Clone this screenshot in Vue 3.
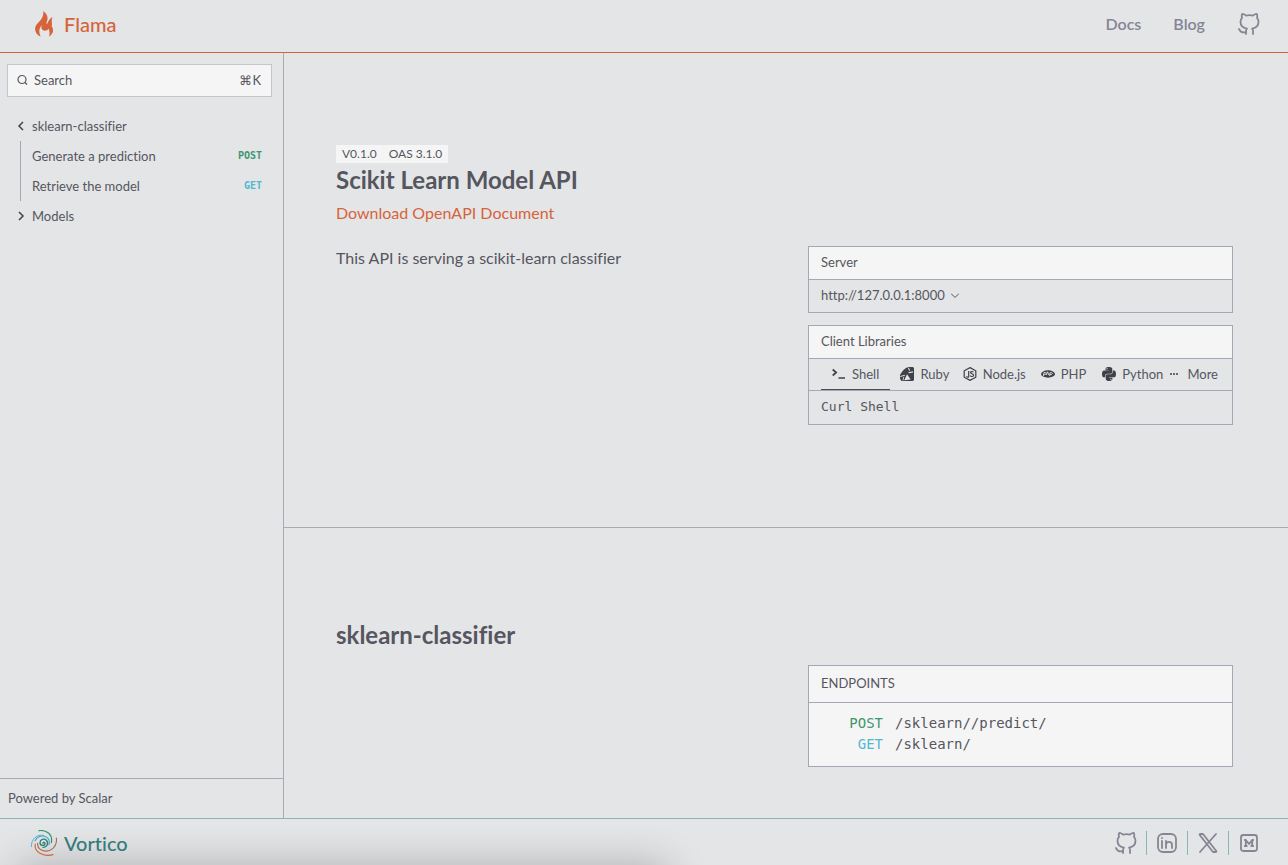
<script setup>
const methods = [
  { name: 'Generate a prediction', method: 'POST' },
  { name: 'Retrieve the model', method: 'GET' },
]
const endpoints = [
  { method: 'POST', path: '/sklearn//predict/' },
  { method: 'GET', path: '/sklearn/' },
]
const socials = [
  {
    label: 'GitHub',
    paths: [
      'M16 22.03V19.16C16.04 18.68 15.97 18.2 15.81 17.75C15.65 17.3 15.39 16.89 15.06 16.55C18.2 16.2 21.5 15.01 21.5 9.55C21.5 8.15 20.96 6.81 20 5.8C20.46 4.58 20.42 3.23 19.91 2.03C19.91 2.03 18.73 1.68 16 3.51C13.71 2.89 11.29 2.89 9 3.51C6.27 1.68 5.09 2.03 5.09 2.03C4.58 3.23 4.54 4.58 5 5.8C4.03 6.82 3.49 8.17 3.5 9.58C3.5 15 6.8 16.19 9.94 16.58C9.61 16.92 9.36 17.32 9.2 17.77C9.03 18.21 8.97 18.68 9 19.16V22.03',
      'M9 20.03C6 21 3.5 20.03 2 17.03',
    ],
  },
  {
    label: 'LinkedIn',
    paths: [
      'M21 8V16C21 18.76 18.76 21 16 21H8C5.24 21 3 18.76 3 16V8C3 5.24 5.24 3 8 3H16C18.76 3 21 5.24 21 8Z',
      'M7 17V13.5V10',
      'M11 17V13.75M11 10V13.75M11 13.75C11 10 17 10 17 13.75V17',
      'M7 7.01L7.01 7',
    ],
  },
  {
    label: 'X',
    paths: [
      'M16.82 20.77L3.75 3.97C3.45 3.57 3.73 3 4.23 3H6.71C6.89 3 7.07 3.09 7.18 3.23L20.25 20.03C20.55 20.43 20.27 21 19.77 21H17.29C17.11 21 16.93 20.91 16.82 20.77Z',
      'M20 3L4 21',
    ],
  },
  {
    label: 'Medium',
    paths: [
      'M4 17.6V6.4C4 5 5 4 6.4 4H17.6C19 4 20 5 20 6.4V17.6C20 19 19 20 17.6 20H6.4C5 20 4 19 4 17.6Z',
      'M7.8 9H8.8L12 13L15.2 9H16.2M8.8 9V15M15.2 9V15M7.8 15H9.8M14.2 15H16.2',
    ],
  },
]
</script>

<template>
  <div class="page">
    <header class="topbar">
      <a class="brand flama" href="#">
        <svg width="18" height="26" viewBox="0 0 54 78" aria-hidden="true">
          <path fill="currentColor" d="M25 0C37 9 40 20 36 31C34 36 34 38 36 40C40 32 42 24 53 18C47 30 53 37 50 46C57 55 56 67 42 77C46 66 42 60 42 53C37 59 25 62 21 55C18 51 19 46 22 42C12 50 10 62 17 77C4 71-2 60 1 48C5 34 28 26 25 0Z" />
        </svg>
        <span>Flama</span>
      </a>
      <nav class="topnav">
        <a href="#">Docs</a>
        <a href="#">Blog</a>
        <a href="#" aria-label="GitHub">
          <svg class="line-icon" viewBox="0 0 24 24"><path v-for="d in socials[0].paths" :key="d" :d="d" /></svg>
        </a>
      </nav>
    </header>

    <div class="body">
      <aside class="sidebar">
        <button class="search" type="button">
          <svg width="11" height="11" viewBox="0 0 11 11" fill="none" stroke="currentColor" stroke-width="1.2" aria-hidden="true">
            <circle cx="5" cy="5.500" r="4" /><path d="M8 8.500L10 10.500" />
          </svg>
          <span>Search</span>
          <span class="keys">⌘K</span>
        </button>
        <nav class="tree">
          <a class="row" href="#">
            <svg class="chev" viewBox="0 0 8 10"><path d="M6 1L2 5L6 9" /></svg>
            <span>sklearn-classifier</span>
          </a>
          <div class="children">
            <a v-for="m in methods" :key="m.name" class="row" href="#">
              <span>{{ m.name }}</span>
              <span class="tag" :class="m.method.toLowerCase()">{{ m.method }}</span>
            </a>
          </div>
          <a class="row" href="#">
            <svg class="chev" viewBox="0 0 8 10"><path d="M2 1L6 5L2 9" /></svg>
            <span>Models</span>
          </a>
        </nav>
        <a class="powered" href="#">Powered by Scalar</a>
      </aside>

      <main class="content">
        <section class="intro">
          <div class="badges"><span>V0.1.0</span><span>OAS 3.1.0</span></div>
          <h1>Scikit Learn Model API</h1>
          <a class="download" href="#">Download OpenAPI Document</a>
          <div class="columns">
            <p>This API is serving a scikit-learn classifier</p>
            <div class="cards">
              <div class="card">
                <div class="card-head">Server</div>
                <button class="server" type="button">
                  <span>http://127.0.0.1:8000</span>
                  <svg width="8" height="6" viewBox="0 0 8 6" fill="none" stroke="currentColor" aria-hidden="true"><path d="M0 1.500L4 5.500L8 1.500" /></svg>
                </button>
              </div>
              <div class="card">
                <div class="card-head">Client Libraries</div>
                <div class="tabs">
                  <button class="tab active" type="button">
                    <svg viewBox="0 0 14 14" fill="none" stroke="currentColor" stroke-width="1.700"><path d="M.7 2.500L4.200 5.500L.7 8.500M6.500 11H13" /></svg>
                    Shell
                  </button>
                  <button class="tab" type="button">
                    <svg viewBox="0 0 14 14">
                      <path fill="currentColor" d="M9.500 0H12.500C13.600.2 14 .9 14 1.700V13L12.800 14H2C.6 13.500 0 12 0 10.500V8C1 6.500 2 4.500 3.500 3C5.500 1 7.500 0 9.500 0Z" />
                      <path fill="#e4e5e7" d="M4.300 13.200L7 7.200L10.700 12.400ZM8.200 5.300L13 4.200V5.400L8.800 6.300ZM.3 9L5 7.800L4.800 8.800L.3 10ZM3.400 10L4.300 9.800L3.300 13.500L2.500 13.200ZM9 .8L10 3.500L9.200 3.900L8 1.300Z" />
                    </svg>
                    Ruby
                  </button>
                  <button class="tab" type="button">
                    <svg viewBox="0 0 14 14" fill="none" stroke="currentColor" stroke-width="1.200">
                      <path d="M7 .6L12.800 3.800V10.200L7 13.400L1.200 10.200V3.800Z" />
                      <path d="M5.700 4V9.200C5.700 10.500 4.700 10.300 3.300 9.500M10.500 5C9.500 4.300 7.500 4.300 7.500 5.500C7.500 7.200 10.600 6.300 10.600 8.300C10.600 9.800 8 9.800 7 8.700" />
                    </svg>
                    Node.js
                  </button>
                  <button class="tab" type="button">
                    <svg viewBox="0 0 14 14">
                      <ellipse cx="7" cy="7" rx="7" ry="3.700" fill="currentColor" />
                      <path d="M2.300 9L3 5.600H4.200C5.700 5.600 5.200 7.600 3.800 7.600H2.800M6.300 4.500L5.500 8M6 5.800H7.200C8 5.800 7.800 6.500 7.500 8M8.500 9L9.200 5.600H10.500C12 5.600 11.400 7.600 10 7.600H9" fill="none" stroke="#e4e5e7" stroke-width=".9" />
                    </svg>
                    PHP
                  </button>
                  <button class="tab" type="button">
                    <svg viewBox="0 32 448 448" fill="currentColor"><path d="M439.800 200.500c-7.700-30.900-22.300-54.200-53.400-54.200h-40.100v47.400c0 36.800-31.200 67.800-66.800 67.800H172.700c-29.200 0-53.400 25-53.400 54.300v101.800c0 29 25.200 46 53.400 54.300 33.800 9.900 66.300 11.700 106.800 0 26.900-7.800 53.400-23.500 53.400-54.300v-40.700H226.200v-13.600h160.200c31.100 0 42.600-21.700 53.400-54.200 11.200-33.500 10.700-65.700 0-108.600zM286.200 404c11.100 0 20.100 9.100 20.100 20.300 0 11.300-9 20.400-20.100 20.400-11 0-20.100-9.200-20.100-20.400.1-11.300 9.100-20.300 20.100-20.300zM167.800 248.100h106.800c29.700 0 53.400-24.500 53.400-54.300V91.900c0-29-24.400-50.700-53.400-55.600-35.800-5.900-74.700-5.600-106.800.1-45.200 8-53.400 24.700-53.400 55.600v40.700h106.900v13.600h-147c-31.100 0-58.300 18.700-66.800 54.200-9.800 40.700-10.200 66.100 0 108.600 7.600 31.600 25.700 54.200 56.800 54.200H101v-48.800c0-35.300 30.500-66.400 66.800-66.400zm-6.700-142.600c-11.100 0-20.100-9.100-20.100-20.300.1-11.300 9-20.400 20.100-20.400 11 0 20.100 9.200 20.100 20.400s-9 20.300-20.100 20.300z" /></svg>
                    Python
                  </button>
                  <button class="tab more" type="button">
                    <svg viewBox="0 0 14 14" fill="currentColor"><path d="M3 6.200h2v1.600H3zM6 6.200h2v1.600H6zM9 6.200h2v1.600H9z" /></svg>
                    More
                  </button>
                </div>
                <div class="snippet">Curl Shell</div>
              </div>
            </div>
          </div>
        </section>

        <section class="group">
          <h2>sklearn-classifier</h2>
          <div class="columns">
            <div></div>
            <div class="card endpoints">
              <div class="card-head">ENDPOINTS</div>
              <div class="endpoint-list">
                <a v-for="e in endpoints" :key="e.path" href="#">
                  <span class="verb" :class="e.method.toLowerCase()">{{ e.method }}</span>
                  <span>{{ e.path }}</span>
                </a>
              </div>
            </div>
          </div>
        </section>
      </main>
    </div>

    <footer class="bottombar">
      <div class="shade"></div>
      <a class="brand vortico" href="#">
        <svg width="26" height="26" viewBox="0 0 78 78" fill="none" stroke-linecap="round" aria-hidden="true">
          <path d="M24 2C48-1 66 14 61 38" stroke="#2f9670" stroke-width="3.500" />
          <path d="M1 50C0 27 18 12 38 16" stroke="#52b4d2" stroke-width="3" />
          <path d="M12 32C18 20 32 15 44 20C53 24 57 33 54 44" stroke="#45a9c4" stroke-width="3.500" />
          <path d="M66 74C38 82 8 66 13 42" stroke="#d8663e" stroke-width="3.500" />
          <path d="M76 24C80 50 58 68 36 62C25 58 19 50 20 40" stroke="#a17451" stroke-width="3.500" />
          <path d="M36 40C36 35 43 36 42 42C40 49 27 47 27 38C27 28 39 24 46 31C54 39 48 53 36 52" stroke="#2c7c7b" stroke-width="4" />
        </svg>
        <span>Vortico</span>
      </a>
      <nav class="socials">
        <a v-for="s in socials" :key="s.label" href="#" :aria-label="s.label">
          <svg class="line-icon" viewBox="0 0 24 24"><path v-for="d in s.paths" :key="d" :d="d" /></svg>
        </a>
      </nav>
    </footer>
  </div>
</template>

<style>
body {
  background: #e4e5e7;
}
</style>

<style scoped>
* {
  box-sizing: border-box;
}
.page {
  display: flex;
  flex-direction: column;
  min-height: 100vh;
  font-family: Lato, sans-serif;
  font-size: 13px;
  line-height: 20px;
  font-variant-ligatures: none;
  color: #555660;
}
a {
  color: inherit;
  text-decoration: none;
}
button {
  font: inherit;
  font-variant-ligatures: none;
  color: inherit;
  background: none;
  border: 0;
  padding: 0;
}
svg {
  display: block;
  flex: none;
}
.line-icon {
  width: 24px;
  height: 24px;
  fill: none;
  stroke: #858693;
  stroke-width: 1.8;
  stroke-linecap: round;
  stroke-linejoin: round;
}
.topbar,
.bottombar {
  display: flex;
  align-items: center;
  justify-content: space-between;
}
.topbar {
  height: 53px;
  padding: 0 27px 4px 35px;
  border-bottom: 1px solid #d6633a;
}
.brand {
  display: flex;
  align-items: center;
  font-size: 20px;
  line-height: 24px;
  font-weight: 500;
}
.flama {
  gap: 11px;
  color: #d6633a;
}
.topnav {
  display: flex;
  align-items: center;
  gap: 32px;
  font-size: 16px;
  font-weight: 600;
  color: #858693;
}
.body {
  display: flex;
  flex: 1;
}
.sidebar {
  display: flex;
  flex-direction: column;
  width: 284px;
  border-right: 1px solid #a8a9b3;
}
.search {
  display: flex;
  align-items: center;
  gap: 6px;
  height: 33px;
  margin: 11px 11px 14px 7px;
  padding: 0 10px 2px 9px;
  border: 1px solid #c4c5cc;
  background: #f5f5f5;
}
.keys {
  margin-left: auto;
}
.tree {
  flex: 1;
  padding: 0 21px 0 17px;
}
.row {
  display: flex;
  align-items: center;
  gap: 7px;
  height: 30px;
}
.chev {
  width: 8px;
  height: 10px;
  fill: none;
  stroke: #41424a;
  stroke-width: 1.5;
}
.children {
  margin-left: 3px;
  padding-left: 11px;
  border-left: 1px solid #a6a7b4;
}
.tag {
  margin-left: auto;
  font: 700 10px/20px "DejaVu Sans Mono", monospace;
}
.post {
  color: #40966f;
}
.get {
  color: #52b8d0;
}
.powered {
  padding: 9px 8px 10px;
  border-top: 1px solid #a8a9b3;
}
.content {
  flex: 1;
  min-width: 0;
}
.intro {
  padding: 92px 55px 102px 52px;
  border-bottom: 1px solid #a8a9b3;
}
.badges {
  display: flex;
  width: max-content;
  background: #f5f5f5;
  font-size: 12px;
  line-height: 18px;
}
.badges span {
  padding: 0 6px;
}
h1,
h2 {
  margin: 0;
  font-size: 24px;
  line-height: 34px;
  font-weight: 700;
}
.download {
  display: block;
  margin-top: 4px;
  font-size: 16px;
  line-height: 24px;
  color: #d6633a;
}
.columns {
  display: grid;
  grid-template-columns: 1fr 1fr;
  gap: 47px;
}
.intro .columns {
  margin-top: 21px;
}
p {
  margin: 0;
  font-size: 16px;
  line-height: 24px;
}
.cards {
  display: grid;
  gap: 12px;
}
.card {
  border: 1px solid #a6a7b4;
}
.card-head {
  padding: 5px 12px 7px;
  background: #f5f5f5;
  border-bottom: 1px solid #a6a7b4;
}
.server {
  display: flex;
  align-items: center;
  gap: 6px;
  width: 100%;
  height: 32px;
  padding: 0 12px 2px;
}
.tabs {
  display: flex;
  height: 32px;
  padding: 0 14px 0 12px;
  border-bottom: 1px solid #a6a7b4;
}
.tab {
  display: flex;
  flex: 1;
  align-items: center;
  justify-content: center;
  gap: 6px;
  min-width: 0;
  padding-bottom: 2px;
}
.tab.active {
  box-shadow: inset 0 -1px #4b4c55;
}
.tab svg {
  width: 14px;
  height: 14px;
  color: #3f4048;
}
.tab.more {
  flex: none;
}
.snippet {
  padding: 6px 12px 7px;
  font: 13px/20px "DejaVu Sans Mono", monospace;
}
.group {
  padding: 90px 55px 51px 52px;
}
.group .columns {
  margin-top: 13px;
}
.endpoints {
  background: #f5f5f5;
}
.endpoints .card-head {
  padding: 7px 12px 9px;
}
.endpoint-list {
  padding: 10px 12px 11px;
  font: 14px/21px "DejaVu Sans Mono", monospace;
}
.endpoint-list a {
  display: flex;
  gap: 12px;
}
.verb {
  width: 62px;
  text-align: right;
}
.bottombar {
  position: relative;
  overflow: hidden;
  height: 47px;
  padding: 2px 19px 0 31px;
  border-top: 1px solid #8bb4b5;
}
.shade {
  position: absolute;
  top: 100%;
  left: 20px;
  width: 50%;
  height: 40px;
  box-shadow: 0 4px 40px 4px rgba(0, 0, 0, 0.24);
}
.vortico {
  position: relative;
  gap: 7px;
  color: #347b7b;
}
.socials {
  display: flex;
}
.socials a {
  padding: 0 8px;
}
.socials a + a {
  border-left: 1px solid #8bb4b5;
}
</style>
